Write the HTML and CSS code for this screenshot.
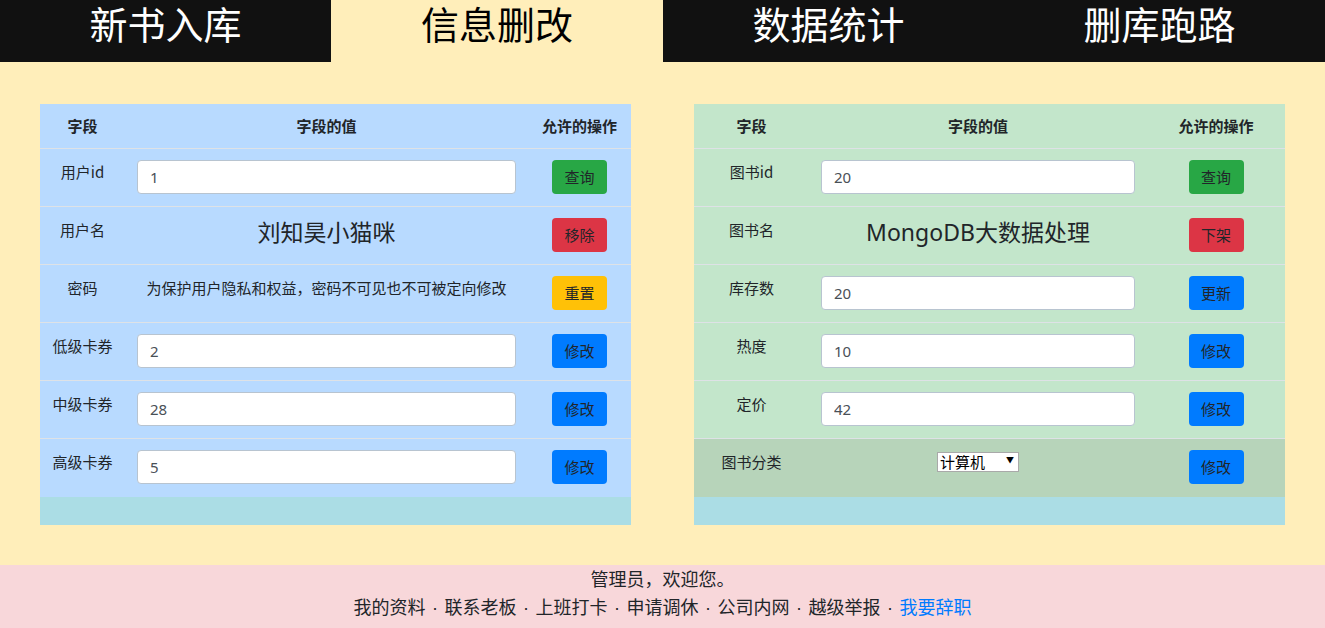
FILE: index.html
```html
<!DOCTYPE html>
<html lang="zh-CN">
<head>
<meta charset="utf-8">
<title>信息删改</title>
<link rel="stylesheet" href="styles.css">
</head>
<body>
<nav class="tabs">
  <a class="tab">新书入库</a>
  <a class="tab active">信息删改</a>
  <a class="tab">数据统计</a>
  <a class="tab">删库跑路</a>
</nav>
<main class="main">
  <table class="grid blue">
    <colgroup><col class="c1a"><col class="c2a"><col class="c3a"></colgroup>
    <thead>
      <tr><th>字段</th><th>字段的值</th><th>允许的操作</th></tr>
    </thead>
    <tbody>
      <tr><td class="lbl">用户id</td><td><input class="field" value="1"></td><td class="act"><button class="btn green">查询</button></td></tr>
      <tr><td class="lbl">用户名</td><td class="big">刘知昊小猫咪</td><td class="act"><button class="btn red">移除</button></td></tr>
      <tr><td class="lbl">密码</td><td class="note">为保护用户隐私和权益，密码不可见也不可被定向修改</td><td class="act"><button class="btn yellow">重置</button></td></tr>
      <tr><td class="lbl">低级卡券</td><td><input class="field" value="2"></td><td class="act"><button class="btn blue-btn">修改</button></td></tr>
      <tr><td class="lbl">中级卡券</td><td><input class="field" value="28"></td><td class="act"><button class="btn blue-btn">修改</button></td></tr>
      <tr><td class="lbl">高级卡券</td><td><input class="field" value="5"></td><td class="act"><button class="btn blue-btn">修改</button></td></tr>
    </tbody>
    <tfoot><tr><td colspan="3" class="strip"></td></tr></tfoot>
  </table>
  <table class="grid green-t">
    <colgroup><col class="c1b"><col class="c2b"><col class="c3b"></colgroup>
    <thead>
      <tr><th>字段</th><th>字段的值</th><th>允许的操作</th></tr>
    </thead>
    <tbody>
      <tr><td class="lbl">图书id</td><td><input class="field" value="20"></td><td class="act"><button class="btn green">查询</button></td></tr>
      <tr><td class="lbl">图书名</td><td class="big">MongoDB大数据处理</td><td class="act"><button class="btn red">下架</button></td></tr>
      <tr><td class="lbl">库存数</td><td><input class="field" value="20"></td><td class="act"><button class="btn blue-btn">更新</button></td></tr>
      <tr><td class="lbl">热度</td><td><input class="field" value="10"></td><td class="act"><button class="btn blue-btn">修改</button></td></tr>
      <tr><td class="lbl">定价</td><td><input class="field" value="42"></td><td class="act"><button class="btn blue-btn">修改</button></td></tr>
      <tr class="dark-row"><td class="lbl">图书分类</td><td class="sel-cell"><span class="sel-wrap"><select class="sel"><option>计算机</option><option>文学</option><option>历史</option></select></span></td><td class="act"><button class="btn blue-btn">修改</button></td></tr>
    </tbody>
    <tfoot><tr><td colspan="3" class="strip"></td></tr></tfoot>
  </table>
</main>
<footer class="foot">
  <div class="foot-line">管理员，欢迎您。</div>
  <div class="foot-line links">我的资料 · 联系老板 · 上班打卡 · 申请调休 · 公司内网 · 越级举报 · <a class="quit">我要辞职</a></div>
</footer>
</body>
</html>
```
FILE: styles.css
```css
* { box-sizing: border-box; }
html, body { margin: 0; padding: 0; }
body {
  background: #ffeeba;
  font-family: "Noto Sans", "Noto Sans CJK SC", sans-serif;
  color: #212529;
  width: 1325px;
  height: 628px;
  overflow: hidden;
}
.tabs {
  display: grid;
  grid-template-columns: 331px 332px 331px 331px;
  height: 62px;
  background: #111;
}
.tab {
  display: block;
  text-align: center;
  color: #fff;
  font-family: "Noto Sans CJK SC", sans-serif;
  font-size: 38px;
  line-height: 46px;
  height: 62px;
}
.tab.active { background: #ffeeba; color: #000; }
.main {
  display: flex;
  gap: 63px;
  padding: 42px 40px 41px;
  height: 503px;
}
.grid {
  width: 591px;
  border-collapse: collapse;
  table-layout: fixed;
  font-size: 15px;
}
.blue { background: #b8daff; }
.green-t { background: #c3e6cb; }
.c1a { width: 85px; } .c2a { width: 403px; } .c3a { width: 103px; }
.c1b { width: 115px; } .c2b { width: 338px; } .c3b { width: 138px; }
.grid th {
  height: 44px;
  padding: 12px 0;
  font-weight: bold;
  line-height: 20px;
  text-align: center;
  font-family: "Noto Sans CJK SC", sans-serif;
}
.grid tbody td {
  border-top: 1px solid #dee2e6;
  padding: 11px 12px 12px;
  vertical-align: top;
  height: 58px;
  line-height: 22px;
}
.lbl { text-align: center; font-family: "Noto Sans CJK SC", sans-serif; padding-left: 0 !important; padding-right: 0 !important; }
.grid tbody td.lbl { padding-top: 12px; }
.act { text-align: center; }
.big {
  text-align: center;
  font-size: 23px;
  line-height: 28px !important;
}
.note { text-align: center; font-family: "Noto Sans CJK SC", sans-serif; font-size: 15px; padding-top: 12px !important; }
.field {
  display: block;
  width: 100%;
  height: 34px;
  border: 1px solid #b8c4d0;
  border-radius: 4px;
  background: #fff;
  padding: 0 12px;
  font-family: "Noto Sans", sans-serif;
  font-size: 15px;
  color: #495057;
}
.btn {
  width: 55px;
  height: 34px;
  padding: 0;
  border: 1px solid transparent;
  border-radius: 4px;
  font-family: "Noto Sans CJK SC", sans-serif;
  font-size: 15px;
  line-height: 32px;
  color: #212529;
}
.green { background: #28a745; }
.red { background: #dc3545; }
.yellow { background: #ffc107; }
.blue-btn { background: #007bff; }
.dark-row td { background: #b7d4ba; }
.sel-cell { text-align: center; }
.grid tbody td.sel-cell { padding-top: 12px; }
.sel-wrap { position: relative; display: inline-block; vertical-align: top; }
.sel {
  appearance: none;
  -webkit-appearance: none;
  width: 82px;
  height: 20px;
  border: 1px solid #a9a9a9;
  border-radius: 0;
  background: #fff;
  font-family: "Noto Sans CJK SC", sans-serif;
  font-size: 15px;
  line-height: 18px;
  padding: 0 0 0 2px;
  color: #000;
}
.sel-wrap::after {
  content: "▼";
  position: absolute;
  right: 5px;
  top: 3px;
  font-size: 8px;
  line-height: 12px;
  color: #000;
  pointer-events: none;
}
.strip { background: #abdde5; height: 28px; padding: 0; }
.foot {
  background: #f8d7da;
  height: 63px;
  padding-top: 1px;
  text-align: center;
  font-family: "Liberation Sans", "Noto Sans CJK SC", sans-serif;
  font-size: 18px;
  line-height: 28px;
  color: #212529;
}
.links { word-spacing: 1.5px; }
.quit { color: #007bff; }
```
